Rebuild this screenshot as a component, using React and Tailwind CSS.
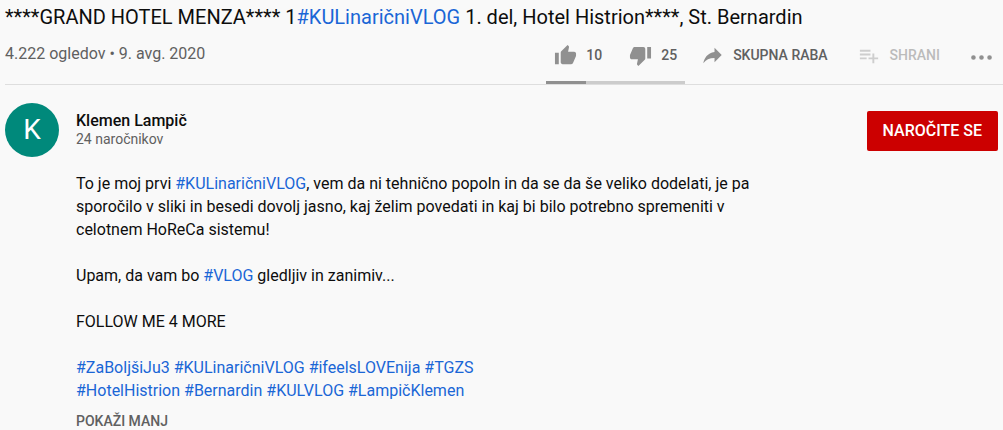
const ICONS = {
  like: "M1 21h4V9H1v12zm22-11c0-1.1-.9-2-2-2h-6.31l.95-4.57.03-.32c0-.41-.17-.79-.44-1.06L14.17 1 7.59 7.59C7.22 7.95 7 8.45 7 9v10c0 1.1.9 2 2 2h9c.83 0 1.54-.5 1.84-1.22l3.02-7.05c.09-.23.14-.47.14-.73v-2z",
  dislike:
    "M15 3H6c-.83 0-1.54.5-1.84 1.22l-3.02 7.05c-.09.23-.14.47-.14.73v2c0 1.1.9 2 2 2h6.31l-.95 4.57-.03.32c0 .41.17.79.44 1.06L9.83 23l6.59-6.59c.36-.36.58-.86.58-1.41V5c0-1.1-.9-2-2-2zm4 0v12h4V3h-4z",
  share:
    "M14.1 8.27V4L21.6 11.47L14.1 18.93V14.56C8.8 14.56 5.07 16.27 2.4 20C3.47 14.67 6.67 9.33 14.1 8.27Z",
  save: "M13 10H2v2h11v-2zm0-4H2v2h11V6zm4 8v-4h-2v4h-4v2h4v4h2v-4h4v-2h-4zM2 16h7v-2H2v2z",
  more: "M3.6 11.7a2.4 2.4 0 1 0 0 4.8a2.4 2.4 0 0 0 0-4.8zM12 11.7a2.4 2.4 0 1 0 0 4.8a2.4 2.4 0 0 0 0-4.8zM20.4 11.7a2.4 2.4 0 1 0 0 4.8a2.4 2.4 0 0 0 0-4.8z",
};

const likes = 10;
const dislikes = 25;

function Icon({ name }) {
  return (
    <svg
      viewBox="0 0 24 24"
      className="size-[23px] shrink-0 fill-[#909090]"
      aria-hidden="true"
    >
      <path d={ICONS[name]} />
    </svg>
  );
}

function Tag({ children }) {
  return (
    <a href="#" className="text-[#1a66d6]">
      {children}
    </a>
  );
}

function Action({ icon, children, ...props }) {
  return (
    <button
      className="flex items-center gap-[9px] text-sm leading-[23px] font-medium text-[#606060] disabled:opacity-40"
      {...props}
    >
      <Icon name={icon} />
      {children}
    </button>
  );
}

export default function App() {
  return (
    <main className="min-h-screen bg-[#f9f9f9] pl-[5px] pt-1 font-['Roboto',sans-serif] text-[#0d0d0d]">
      <h1 className="text-xl leading-[26px]">
        ****GRAND HOTEL MENZA**** 1<Tag>#KULinaričniVLOG</Tag> 1. del, Hotel
        Histrion****, St. Bernardin
      </h1>

      <div className="flex justify-between border-b border-[#dedede]">
        <p className="pt-3 text-base leading-[23px] text-[#606060]">
          4.222 ogledov • 9. avg. 2020
        </p>
        <div className="flex gap-4 pr-[10px]">
          <div className="flex h-[54px] flex-col justify-between">
            <div className="flex gap-[27px] px-2 pt-[14px]">
              <Action icon="like">{likes}</Action>
              <Action icon="dislike">{dislikes}</Action>
            </div>
            <div className="h-[3px] bg-[#cccccc]">
              <div
                className="h-full bg-[#909090]"
                style={{ width: `${(likes / (likes + dislikes)) * 100}%` }}
              />
            </div>
          </div>
          <div className="flex items-start gap-[30px] pt-[14px]">
            <Action icon="share">SKUPNA RABA</Action>
            <Action icon="save" disabled>
              SHRANI
            </Action>
            <Action icon="more" aria-label="Več dejanj" />
          </div>
        </div>
      </div>

      <section className="flex items-start pr-[5px] pt-[18px]">
        <div className="flex size-[54px] shrink-0 items-center justify-center rounded-full bg-[#00897b] text-[28px] text-white">
          K
        </div>
        <div className="ml-[17px] grow pt-2">
          <a href="#" className="block text-base leading-5 font-medium">
            Klemen Lampič
          </a>
          <p className="text-sm leading-4 text-[#606060]">24 naročnikov</p>
        </div>
        <button className="mt-2 h-10 rounded-xs bg-[#cc0000] px-4 text-base font-medium text-white">
          NAROČITE SE
        </button>
      </section>

      <section className="ml-[71px] pt-[15px]">
        <div className="flex flex-col gap-[23px] text-base leading-[23px]">
          <p>
            To je moj prvi <Tag>#KULinaričniVLOG</Tag>, vem da ni tehnično
            popoln in da se da še veliko dodelati, je pa
            <br />
            sporočilo v sliki in besedi dovolj jasno, kaj želim povedati in kaj
            bi bilo potrebno spremeniti v
            <br />
            celotnem HoReCa sistemu!
          </p>
          <p>
            Upam, da vam bo <Tag>#VLOG</Tag> gledljiv in zanimiv...
          </p>
          <p>FOLLOW ME 4 MORE</p>
          <p>
            <Tag>#ZaBoljšiJu3</Tag> <Tag>#KULinaričniVLOG</Tag>{" "}
            <Tag>#ifeelsLOVEnija</Tag> <Tag>#TGZS</Tag>
            <br />
            <Tag>#HotelHistrion</Tag> <Tag>#Bernardin</Tag>{" "}
            <Tag>#KULVLOG</Tag> <Tag>#LampičKlemen</Tag>
          </p>
        </div>
        <button className="mt-2 block text-sm leading-[23px] font-medium text-[#606060]">
          POKAŽI MANJ
        </button>
      </section>
    </main>
  );
}
